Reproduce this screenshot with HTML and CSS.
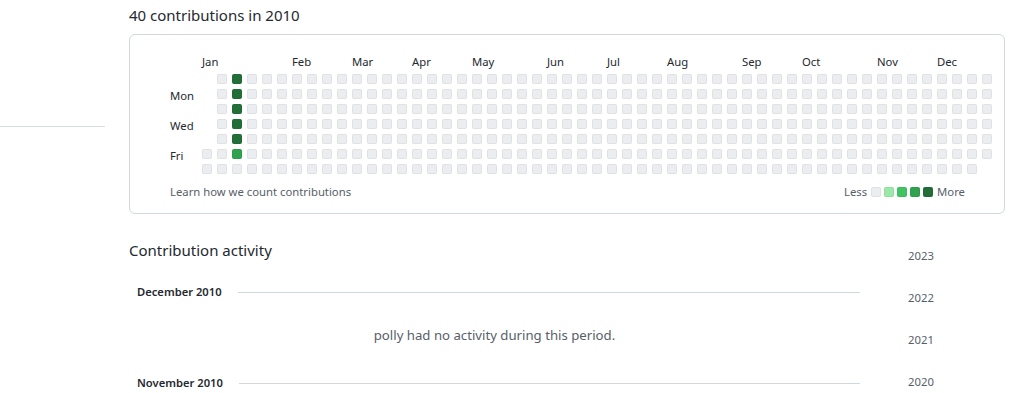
FILE: index.html
```html
<!DOCTYPE html>
<html lang="en">
<head>
    <meta charset="UTF-8">
    <meta name="viewport" content="width=device-width, initial-scale=1.0">
    <title>polly - contributions</title>
    <link rel="stylesheet" href="styles.css">
</head>
<body>
    <div class="page">
        <div class="sidebar">
            <div class="sidebar-rule"></div>
        </div>

        <div class="main">
            <h2 class="graph-title">40 contributions in 2010</h2>

            <div class="graph-box">
                <div class="calendar" id="calendar">
                    <span class="wday" style="grid-row: 3">Mon</span>
                    <span class="wday" style="grid-row: 5">Wed</span>
                    <span class="wday" style="grid-row: 7">Fri</span>
                </div>
                <div class="graph-footer">
                    <a class="learn" href="#">Learn how we count contributions</a>
                    <div class="legend">
                        <span>Less</span>
                        <span class="day"></span>
                        <span class="day l1"></span>
                        <span class="day l2"></span>
                        <span class="day l3"></span>
                        <span class="day l4"></span>
                        <span>More</span>
                    </div>
                </div>
            </div>

            <div class="activity">
                <div class="timeline">
                    <h2 class="activity-title">Contribution activity</h2>

                    <div class="month-head">
                        <span>December 2010</span>
                        <div class="month-line"></div>
                    </div>
                    <p class="empty">polly had no activity during this period.</p>

                    <div class="month-head">
                        <span>November 2010</span>
                        <div class="month-line"></div>
                    </div>
                </div>

                <ul class="years">
                    <li><a href="#">2023</a></li>
                    <li><a href="#">2022</a></li>
                    <li><a href="#">2021</a></li>
                    <li><a href="#">2020</a></li>
                </ul>
            </div>
        </div>
    </div>

    <script>
        const calendar = document.getElementById("calendar");

        // month label -> week column
        const months = [
            ["Jan", 0], ["Feb", 6], ["Mar", 10], ["Apr", 14], ["May", 18], ["Jun", 23],
            ["Jul", 27], ["Aug", 31], ["Sep", 36], ["Oct", 40], ["Nov", 45], ["Dec", 49]
        ];
        months.forEach(([name, col]) => {
            const label = document.createElement("span");
            label.className = "month";
            label.textContent = name;
            label.style.gridColumn = col + 2;
            calendar.appendChild(label);
        });

        // contributions per day index (0 = Jan 1, a Friday)
        const levels = { 9: 4, 10: 4, 11: 4, 12: 4, 13: 4, 14: 3 };

        for (let i = 0; i < 365; i++) {
            const slot = i + 5; // Jan 1 sits in the Friday row
            const cell = document.createElement("span");
            cell.className = "day" + (levels[i] ? " l" + levels[i] : "");
            cell.style.gridColumn = Math.floor(slot / 7) + 2;
            cell.style.gridRow = (slot % 7) + 2;
            calendar.appendChild(cell);
        }
    </script>
</body>
</html>
```

FILE: styles.css
```css
body { margin: 0; font-family: "Noto Sans", "Open Sans", sans-serif; color: #24292f; background: #fff; }
a { color: inherit; text-decoration: none; }

.page { display: flex; }
.sidebar { width: 105px; flex-shrink: 0; }
.sidebar-rule { margin-top: 126px; border-top: 1px solid #d8dee4; }

.main { width: 876px; margin-left: 24px; }
.graph-title { margin: 3px 0 7px; font-size: 15px; font-weight: 400; line-height: 24px; }

.graph-box { border: 1px solid #d0d7de; border-radius: 6px; padding: 19px 39px 12px 40px; }
.calendar { display: grid; grid-template-columns: 27px repeat(53, 10px); grid-template-rows: 15px repeat(7, 10px); column-gap: 5px; row-gap: 5px; font-size: 11.3px; }
.month { grid-row: 1; white-space: nowrap; line-height: 15px; }
.wday { grid-column: 1; line-height: 10px; margin-top: 2px; white-space: nowrap; }

.day { display: inline-block; width: 10px; height: 10px; box-sizing: border-box; border-radius: 2px; background: #ebedf0; border: 1px solid rgba(27, 31, 36, 0.06); }
.day.l1 { background: #9be9a8; }
.day.l2 { background: #40c463; }
.day.l3 { background: #30a14e; }
.day.l4 { background: #216e39; }

.graph-footer { display: flex; justify-content: space-between; align-items: center; margin-top: 9px; font-size: 11.3px; line-height: 18px; color: #57606a; }
.legend { display: flex; align-items: center; gap: 3px; }
.legend span:first-child { margin-right: 1px; }
.legend span:last-child { margin-left: 1px; }

.activity { display: flex; margin-top: 20px; }
.timeline { width: 731px; }
.activity-title { margin: 4px 0 0; font-size: 15px; font-weight: 400; line-height: 24px; }

.month-head { display: flex; align-items: center; padding-left: 8px; font-size: 11.2px; font-weight: 600; line-height: 18px; }
.activity-title + .month-head { margin-top: 21px; }
.month-line { flex: 1; height: 1px; background: #d0d7de; margin-left: 16px; }

.empty { margin: 24px 0 28px; text-align: center; font-size: 13.2px; line-height: 21px; color: #57606a; }

.years { list-style: none; margin: 1px 0 0 48px; padding: 0; font-size: 11.3px; color: #57606a; }
.years li { line-height: 18px; padding: 12px 0; }
```
